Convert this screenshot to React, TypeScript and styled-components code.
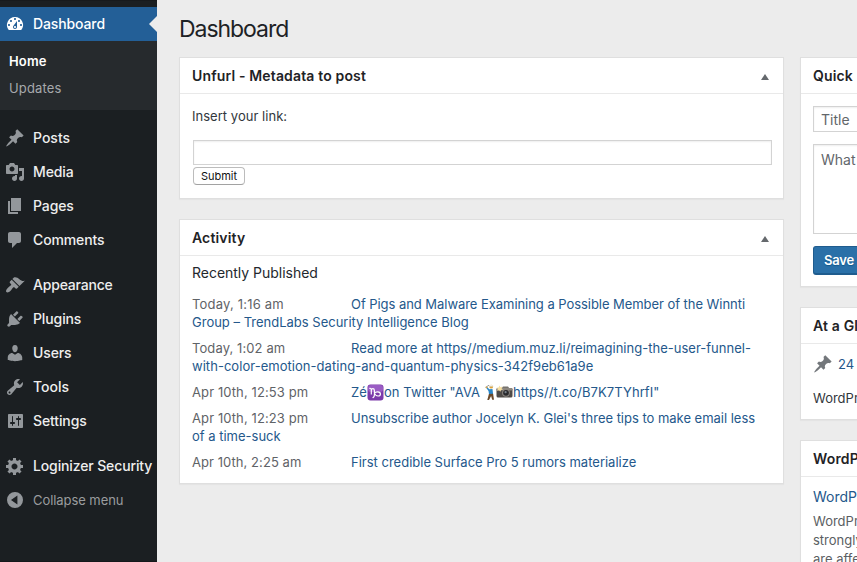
import React from "react";
import styled, { createGlobalStyle, css } from "styled-components";

const Global = createGlobalStyle`
  *, *::before, *::after { box-sizing: border-box; }
  body {
    margin: 0;
    background: #ececec;
    overflow: hidden;
    font-family: Inter, "Liberation Sans", sans-serif;
    font-size: 13px;
    color: #32373c;
  }
  h1, h2, h3, p, ul { margin: 0; padding: 0; }
  ul { list-style: none; }
`;

const Page = styled.div`
  display: flex;
  width: 857px;
  height: 562px;
  overflow: hidden;
`;

const Sidebar = styled.nav`
  flex: 0 0 157px;
  height: 562px;
  padding-top: 7px;
  background: #1b1f22;
  border-bottom: 1px solid #15181b;
  box-shadow: inset 0 1px 0 #171a1d;
`;

const MenuGroup = styled.ul`
  & + & { margin-top: 11px; }
`;

const MenuItem = styled.li<{ $active?: boolean; $muted?: boolean; $track?: number }>`
  display: flex;
  align-items: center;
  height: 34px;
  padding-left: 5px;
  gap: 8px;
  white-space: nowrap;
  font-size: 14px;
  font-weight: 500;
  letter-spacing: ${(p) => p.$track ?? -0.12}px;
  color: #eee;
  svg { flex: none; fill: #93979b; }
  ${(p) =>
    p.$muted &&
    css`
      font-size: 13px;
      font-weight: 400;
      color: #9a9c9e;
    `}
  ${(p) =>
    p.$active &&
    css`
      color: #fff;
      background: #235f97;
      svg { fill: #fff; }
      &::after {
        content: "";
        margin-left: auto;
        border: 8px solid transparent;
        border-left-width: 0;
        border-right-color: #ececec;
      }
    `}
`;

const MenuLabel = styled.span`
  line-height: 20px;
`;

const Submenu = styled.ul`
  height: 69px;
  padding: 7px 9px;
  background: #262a2d;
  margin-bottom: 11px;
`;

const SubmenuItem = styled.li<{ $current?: boolean }>`
  height: 27px;
  line-height: 27px;
  font-weight: ${(p) => (p.$current ? 600 : 400)};
  letter-spacing: 0.15px;
  color: ${(p) => (p.$current ? "#fff" : "#a6a9ac")};
`;

const Content = styled.main`
  flex: none;
  width: 900px;
  padding: 14px 0 0 22px;
`;

const PageTitle = styled.h1`
  height: 43px;
  font-size: 23px;
  font-weight: 400;
  line-height: 30px;
  letter-spacing: -1.05px;
  color: #1d2225;
`;

const Columns = styled.div`
  display: flex;
  align-items: flex-start;
  gap: 16px;
`;

const Column = styled.div`
  display: flex;
  flex: none;
  flex-direction: column;
  gap: 20px;
  width: 605px;
`;

const Panel = styled.section<{ $height: number }>`
  height: ${(p) => p.$height}px;
  overflow: hidden;
  background: #fff;
  border: 1px solid #dfdfdf;
  box-shadow: 0 1px 1px rgba(0, 0, 0, 0.03);
`;

const PanelHeader = styled.header`
  display: flex;
  align-items: center;
  justify-content: space-between;
  height: 36px;
  padding: 0 14px 0 12px;
  border-bottom: 1px solid #e9e9e9;
`;

const PanelTitle = styled.h2`
  font-size: 14px;
  font-weight: 600;
  letter-spacing: 0.15px;
  color: #1f2326;
`;

const Toggle = styled.span`
  margin-top: 2px;
  border: 4px solid transparent;
  border-top: 0;
  border-bottom: 6px solid #65696d;
`;

const Form = styled.form`
  display: flex;
  flex-direction: column;
  align-items: flex-start;
  padding: 0 11px 0 13px;
`;

const Label = styled.label`
  margin: 13px 0 14px -1px;
  line-height: 19px;
  letter-spacing: 0.03px;
`;

const TextInput = styled.input`
  width: 100%;
  height: 25px;
  border: 1px solid #d3d3d3;
  box-shadow: inset 0 1px 2px rgba(0, 0, 0, 0.07);
`;

const SubmitButton = styled.button`
  width: 52px;
  height: 18px;
  margin-top: 2px;
  padding: 0;
  border: 1px solid #bcbcbc;
  border-bottom-color: #a2a2a2;
  border-radius: 4px;
  background: #fff;
  color: #111;
  font: 400 11px/15px Inter, sans-serif;
  letter-spacing: 0;
`;

const Activity = styled.div`
  padding: 7px 12px;
`;

const ActivityTitle = styled.h3`
  font-size: 14px;
  font-weight: 400;
  line-height: 20px;
  letter-spacing: -0.02px;
  margin-bottom: 12px;
  color: #23282d;
`;

const Entry = styled.li`
  line-height: 18px;
  margin-bottom: 8px;
  white-space: nowrap;
`;

const Stamp = styled.span<{ $track?: number }>`
  display: inline-block;
  width: 159px;
  letter-spacing: ${(p) => p.$track ?? 0}px;
  color: #5f6367;
`;

const Line = styled.a<{ $track?: number }>`
  letter-spacing: ${(p) => p.$track ?? 0}px;
  color: #24588b;
  svg { vertical-align: -4px; }
`;

const DraftForm = styled.form`
  display: flex;
  flex-direction: column;
  align-items: flex-start;
  gap: 12px;
  padding: 12px;
`;

const fieldStyle = css`
  width: 300px;
  border: 1px solid #d3d3d3;
  border-radius: 0;
  box-shadow: inset 0 1px 2px rgba(0, 0, 0, 0.07);
  font: 400 14px/18px Inter, sans-serif;
  resize: none;
  &::placeholder { color: #62666a; opacity: 1; }
`;

const DraftTitle = styled.input`
  ${fieldStyle}
  height: 26px;
  padding: 1px 7px;
`;

const DraftBody = styled.textarea`
  ${fieldStyle}
  display: block;
  height: 90px;
  padding: 6px 7px;
`;

const SaveButton = styled.button`
  width: 90px;
  height: 29px;
  padding: 0 0 0 10px;
  text-align: left;
  border: 1px solid #1f5c8e;
  border-bottom-width: 2px;
  border-radius: 3px;
  background: #2a70a8;
  color: #fff;
  font: 600 13px/24px Inter, sans-serif;
  letter-spacing: -0.2px;
  text-shadow: 0 1px 1px #12598c;
`;

const Glance = styled.div`
  padding: 12px;
  white-space: nowrap;
`;

const GlanceCount = styled.a`
  display: flex;
  align-items: center;
  gap: 5px;
  height: 20px;
  color: #24588b;
  margin: -2px 0 16px;
  svg { fill: #73777b; }
`;

const News = styled.div`
  padding: 11px 12px;
  white-space: nowrap;
`;

const NewsLink = styled.a`
  display: block;
  font-size: 14px;
  line-height: 18px;
  margin-bottom: 6px;
  color: #24588b;
`;

const NewsText = styled.p`
  line-height: 19px;
  color: #5a5e62;
`;

const paths = {
  dashboard:
    "M3.76 16h12.48A7.998 7.998 0 0 0 10 3a7.998 7.998 0 0 0-6.24 13zM10 4c.55 0 1 .45 1 1s-.45 1-1 1-1-.45-1-1 .45-1 1-1zM6 6c.55 0 1 .45 1 1s-.45 1-1 1-1-.45-1-1 .45-1 1-1zm8 0c.55 0 1 .45 1 1s-.45 1-1 1-1-.45-1-1 .45-1 1-1zm-5.37 5.55L12 7v6c0 1.1-.9 2-2 2s-2-.9-2-2c0-.57.24-1.08.63-1.45zM4 10c.55 0 1 .45 1 1s-.45 1-1 1-1-.45-1-1 .45-1 1-1zm12 0c.55 0 1 .45 1 1s-.45 1-1 1-1-.45-1-1 .45-1 1-1zm-5 3c0-.55-.45-1-1-1s-1 .45-1 1 .45 1 1 1 1-.45 1-1z",
  pin: "M10.44 3.02l1.82-1.82 6.36 6.35-1.83 1.82c-1.05-.68-2.48-.57-3.41.36l-.75.75c-.92.93-1.04 2.35-.35 3.41l-1.83 1.82-2.41-2.41-2.8 2.79c-.42.42-3.38 2.71-3.8 2.29s1.86-3.39 2.28-3.81l2.79-2.79L4.1 9.36l1.83-1.82c1.05.69 2.48.57 3.4-.36l.75-.75c.93-.92 1.05-2.35.36-3.41z",
  media:
    "M13 11V4c0-.55-.45-1-1-1h-1.67L9 1H5L3.67 3H2c-.55 0-1 .45-1 1v7c0 .55.45 1 1 1h10c.55 0 1-.45 1-1zM7 4.5c1.38 0 2.5 1.12 2.5 2.5S8.38 9.5 7 9.5 4.5 8.38 4.5 7 5.62 4.5 7 4.5zM14 6h5v10.5c0 1.38-1.12 2.5-2.5 2.5S14 17.88 14 16.5s1.12-2.5 2.5-2.5c.17 0 .34.02.5.05V9h-3V6zm-4 8.05V13h2v3.5c0 1.38-1.12 2.5-2.5 2.5S7 17.88 7 16.5 8.12 14 9.5 14c.17 0 .34.02.5.05z",
  page: "M6 15V2h10v13H6zm-1 1h8v2H3V5h2v11z",
  comment:
    "M5 2h9c1.1 0 2 .9 2 2v7c0 1.1-.9 2-2 2h-2l-5 5v-5H5c-1.1 0-2-.9-2-2V4c0-1.1.9-2 2-2z",
  brush:
    "M14.48 11.06L7.41 3.99l1.5-1.5c.5-.56 2.3-.47 3.51.32 1.21.8 1.43 1.28 2.91 2.1 1.18.64 2.45 1.26 4.45.85zm-.71.71L6.7 4.7 4.93 6.47c-.39.39-.39 1.02 0 1.41l1.06 1.06c.39.39.39 1.03 0 1.42-.6.6-1.43 1.11-2.21 1.69-.35.26-.7.53-1.01.84C1.43 14.23.4 16.08 1.4 17.07c.99 1 2.84-.03 4.18-1.36.31-.31.58-.66.85-1.02.57-.78 1.08-1.61 1.69-2.21.39-.39 1.02-.39 1.41 0l1.06 1.06c.39.39 1.02.39 1.41 0z",
  plug: "M13.11 4.36L9.87 7.6 8 5.73l3.24-3.24c.35-.34 1.05-.2 1.56.32.52.51.66 1.21.31 1.55zm-8 1.77l.91-1.12 9.01 9.01-1.19.84c-.71.71-2.63 1.16-3.82 1.16H6.14L4.9 17.26c-.59.59-1.54.59-2.12 0-.59-.58-.59-1.53 0-2.12l1.24-1.24v-3.88c0-1.13.4-3.19 1.09-3.89zm7.26 3.97l3.24-3.24c.34-.35 1.04-.21 1.55.31.52.51.66 1.21.31 1.55l-3.24 3.25z",
  user: "M10 9.25c-2.27 0-2.73-3.44-2.73-3.44C7 4.02 7.82 2 9.97 2c2.16 0 2.98 2.02 2.71 3.81 0 0-.41 3.44-2.68 3.44zm0 2.57L12.72 10c2.39 0 4.52 2.33 4.52 4.53v2.49s-3.65 1.13-7.24 1.13c-3.65 0-7.24-1.13-7.24-1.13v-2.49c0-2.25 1.94-4.48 4.47-4.48z",
  wrench:
    "M16.68 9.77c-1.34 1.34-3.3 1.67-4.95.99l-5.41 6.52c-.99.99-2.59.99-3.58 0s-.99-2.59 0-3.57l6.52-5.42c-.68-1.65-.35-3.61.99-4.95 1.28-1.28 3.12-1.62 4.72-1.06l-2.89 2.89 2.82 2.82 2.86-2.87c.53 1.58.18 3.39-1.08 4.65zM3.81 16.21c.4.39 1.04.39 1.43 0 .4-.4.4-1.04 0-1.43-.39-.4-1.03-.4-1.43 0-.39.39-.39 1.03 0 1.43z",
  sliders:
    "M18 16V4c0-.55-.45-1-1-1H4c-.55 0-1 .45-1 1v12c0 .55.45 1 1 1h13c.55 0 1-.45 1-1zM8 11h1c.55 0 1 .45 1 1s-.45 1-1 1H8v1.5c0 .28-.22.5-.5.5s-.5-.22-.5-.5V13H6c-.55 0-1-.45-1-1s.45-1 1-1h1V5.5c0-.28.22-.5.5-.5s.5.22.5.5V11zm5-2h-1c-.55 0-1-.45-1-1s.45-1 1-1h1V5.5c0-.28.22-.5.5-.5s.5.22.5.5V7h1c.55 0 1 .45 1 1s-.45 1-1 1h-1v5.500c0 .28-.22.5-.5.5s-.5-.22-.5-.5V9z",
  gear: "M18 12h-2.18c-.17.7-.44 1.35-.81 1.93l1.54 1.54-2.1 2.1-1.54-1.54c-.58.36-1.23.63-1.91.79V19H8v-2.18c-.68-.16-1.33-.43-1.91-.79l-1.54 1.54-2.12-2.12 1.54-1.54c-.36-.58-.63-1.23-.79-1.91H1V9.03h2.17c.16-.7.44-1.35.8-1.94L2.43 5.55l2.1-2.1 1.54 1.54c.58-.37 1.24-.64 1.93-.81V2h3v2.18c.68.16 1.33.43 1.91.79l1.54-1.54 2.12 2.12-1.54 1.54c.36.59.64 1.24.8 1.94H18V12zm-8.5 1.5c1.66 0 3-1.34 3-3s-1.34-3-3-3-3 1.34-3 3 1.34 3 3 3z",
  collapse: "M10 2a8 8 0 1 0 0 16a8 8 0 1 0 0-16zM12.4 5.6v8.8L6 10z",
};

type IconName = keyof typeof paths;

const Icon = ({ name }: { name: IconName }) => (
  <svg width="20" height="20" viewBox="0 0 20 20" aria-hidden="true">
    <path fillRule="evenodd" d={paths[name]} />
  </svg>
);

const CapricornEmoji = () => (
  <svg width="17" height="17" viewBox="0 0 17 17" aria-hidden="true">
    <rect x="0.5" y="0.5" width="16" height="16" rx="3" fill="#7c3aaa" />
    <rect x="1" y="1" width="15" height="7" rx="3" fill="#9a5cc4" />
    <path
      d="M2.800 4.300q1.500-.3 1.500 1.800v4.400V6.500q0-1.900 1.500-1.900t1.600 1.900V11q0 2.100-1.400 2.600M7.400 9.500q1-1.700 3.200-1.700 2.800 0 2.800 2.100t-2.400 2.100q-2 0-3.600-2.500"
      fill="none"
      stroke="#fff"
      strokeWidth="1.2"
      strokeLinecap="round"
    />
  </svg>
);

const GolferEmoji = () => (
  <svg width="12" height="17" viewBox="0 0 12 17" aria-hidden="true">
    <path d="M1.500 3.500L5 1.200" stroke="#8c8f92" strokeWidth="0.9" />
    <circle cx="7.200" cy="2.700" r="1.900" fill="#d9a441" />
    <path d="M5.200 2Q7-.5 9.200 1.800L9.500 2.400H5z" fill="#eef0f2" />
    <path d="M2 3.500l1.500-.3 1.700 2 3.300-.2.600 5.200H5L4.500 7z" fill="#2a86c8" />
    <path d="M1.500 2.800l1.400-.3.800 1.300-1.300.6z" fill="#d9a441" />
    <path d="M4.900 10l4.200-.2.900 6H8.200L7.100 11.900 5 16H3.300z" fill="#6b4a2b" />
  </svg>
);

const CameraEmoji = () => (
  <svg width="17" height="17" viewBox="0 0 17 17" aria-hidden="true">
    <path d="M5.500 4.500l1.500-2h5l1.500 2z" fill="#77736e" />
    <rect x="0.500" y="4" width="16" height="9.500" rx="1.500" fill="#4e4a47" />
    <rect x="0.500" y="4" width="16" height="2.500" rx="1" fill="#8d8780" />
    <path
      d="M3.500 1.500l.9 1.700 2-.6-.8 1.900 1.400 1.100-2 .4-.7 1.700-1.200-1.400-2 .4.700-1.800L.7 3.700l1.900-.2z"
      fill="#f6dfa2"
    />
    <circle cx="10" cy="8.800" r="3.900" fill="#8b8681" />
    <circle cx="10" cy="8.800" r="2.900" fill="#2a2a2d" />
    <circle cx="9.600" cy="8.200" r="1.100" fill="#77808a" />
  </svg>
);

const menu: { icon: IconName; label: string; muted?: boolean; track?: number }[][] = [
  [
    { icon: "pin", label: "Posts", track: 0 },
    { icon: "media", label: "Media" },
    { icon: "page", label: "Pages" },
    { icon: "comment", label: "Comments" },
  ],
  [
    { icon: "brush", label: "Appearance", track: -0.2 },
    { icon: "plug", label: "Plugins" },
    { icon: "user", label: "Users" },
    { icon: "wrench", label: "Tools", track: 0 },
    { icon: "sliders", label: "Settings" },
  ],
  [
    { icon: "gear", label: "Loginizer Security", track: -0.13 },
    { icon: "collapse", label: "Collapse menu", muted: true, track: -0.07 },
  ],
];

type TextLine = { text: React.ReactNode; track?: number };

const entries: { stamp: string; stampTrack?: number; lines: TextLine[] }[] = [
  {
    stamp: "Today, 1:16 am",
    stampTrack: 0.2,
    lines: [
      { text: "Of Pigs and Malware Examining a Possible Member of the Winnti", track: -0.05 },
      { text: "Group – TrendLabs Security Intelligence Blog" },
    ],
  },
  {
    stamp: "Today, 1:02 am",
    stampTrack: 0.1,
    lines: [
      { text: "Read more at https//medium.muz.li/reimagining-the-user-funnel-", track: 0.01 },
      { text: "with-color-emotion-dating-and-quantum-physics-342f9eb61a9e", track: 0.04 },
    ],
  },
  {
    stamp: "Apr 10th, 12:53 pm",
    stampTrack: 0.1,
    lines: [
      {
        text: (
          <>
            Zé
            <CapricornEmoji />
            on Twitter "AVA <GolferEmoji />
            <CameraEmoji />
            https//t.co/B7K7TYhrfI"
          </>
        ),
        track: 0.09,
      },
    ],
  },
  {
    stamp: "Apr 10th, 12:23 pm",
    stampTrack: 0.1,
    lines: [
      { text: "Unsubscribe author Jocelyn K. Glei's three tips to make email less", track: -0.02 },
      { text: "of a time-suck" },
    ],
  },
  {
    stamp: "Apr 10th, 2:25 am",
    stampTrack: 0.06,
    lines: [{ text: "First credible Surface Pro 5 rumors materialize" }],
  },
];

export default function App() {
  return (
    <>
      <Global />
      <Page>
        <Sidebar>
          <MenuItem as="div" $active>
            <Icon name="dashboard" />
            <MenuLabel>Dashboard</MenuLabel>
          </MenuItem>
          <Submenu>
            <SubmenuItem $current>Home</SubmenuItem>
            <SubmenuItem>Updates</SubmenuItem>
          </Submenu>
          {menu.map((group, i) => (
            <MenuGroup key={i}>
              {group.map((item) => (
                <MenuItem key={item.label} $muted={item.muted} $track={item.track}>
                  <Icon name={item.icon} />
                  <MenuLabel>{item.label}</MenuLabel>
                </MenuItem>
              ))}
            </MenuGroup>
          ))}
        </Sidebar>
        <Content>
          <PageTitle>Dashboard</PageTitle>
          <Columns>
            <Column>
              <Panel $height={142}>
                <PanelHeader>
                  <PanelTitle>Unfurl - Metadata to post</PanelTitle>
                  <Toggle />
                </PanelHeader>
                <Form>
                  <Label htmlFor="link">Insert your link:</Label>
                  <TextInput id="link" />
                  <SubmitButton type="button">Submit</SubmitButton>
                </Form>
              </Panel>
              <Panel $height={265}>
                <PanelHeader>
                  <PanelTitle>Activity</PanelTitle>
                  <Toggle />
                </PanelHeader>
                <Activity>
                  <ActivityTitle>Recently Published</ActivityTitle>
                  <ul>
                    {entries.map((entry) => (
                      <Entry key={entry.stamp}>
                        <Stamp $track={entry.stampTrack}>{entry.stamp}</Stamp>
                        {entry.lines.map((line, i) => (
                          <React.Fragment key={i}>
                            {i > 0 && <br />}
                            <Line $track={line.track}>{line.text}</Line>
                          </React.Fragment>
                        ))}
                      </Entry>
                    ))}
                  </ul>
                </Activity>
              </Panel>
            </Column>
            <Column>
              <Panel $height={230}>
                <PanelHeader>
                  <PanelTitle>Quick</PanelTitle>
                </PanelHeader>
                <DraftForm>
                  <DraftTitle placeholder="Title" />
                  <DraftBody placeholder="What" />
                  <SaveButton type="button">Save</SaveButton>
                </DraftForm>
              </Panel>
              <Panel $height={113}>
                <PanelHeader>
                  <PanelTitle>At a Gl</PanelTitle>
                </PanelHeader>
                <Glance>
                  <GlanceCount>
                    <Icon name="pin" />
                    24
                  </GlanceCount>
                  <p>WordPr</p>
                </Glance>
              </Panel>
              <Panel $height={200}>
                <PanelHeader>
                  <PanelTitle>WordP</PanelTitle>
                </PanelHeader>
                <News>
                  <NewsLink>WordP</NewsLink>
                  <NewsText>
                    WordPr
                    <br />
                    strongly
                    <br />
                    are affe
                  </NewsText>
                </News>
              </Panel>
            </Column>
          </Columns>
        </Content>
      </Page>
    </>
  );
}
